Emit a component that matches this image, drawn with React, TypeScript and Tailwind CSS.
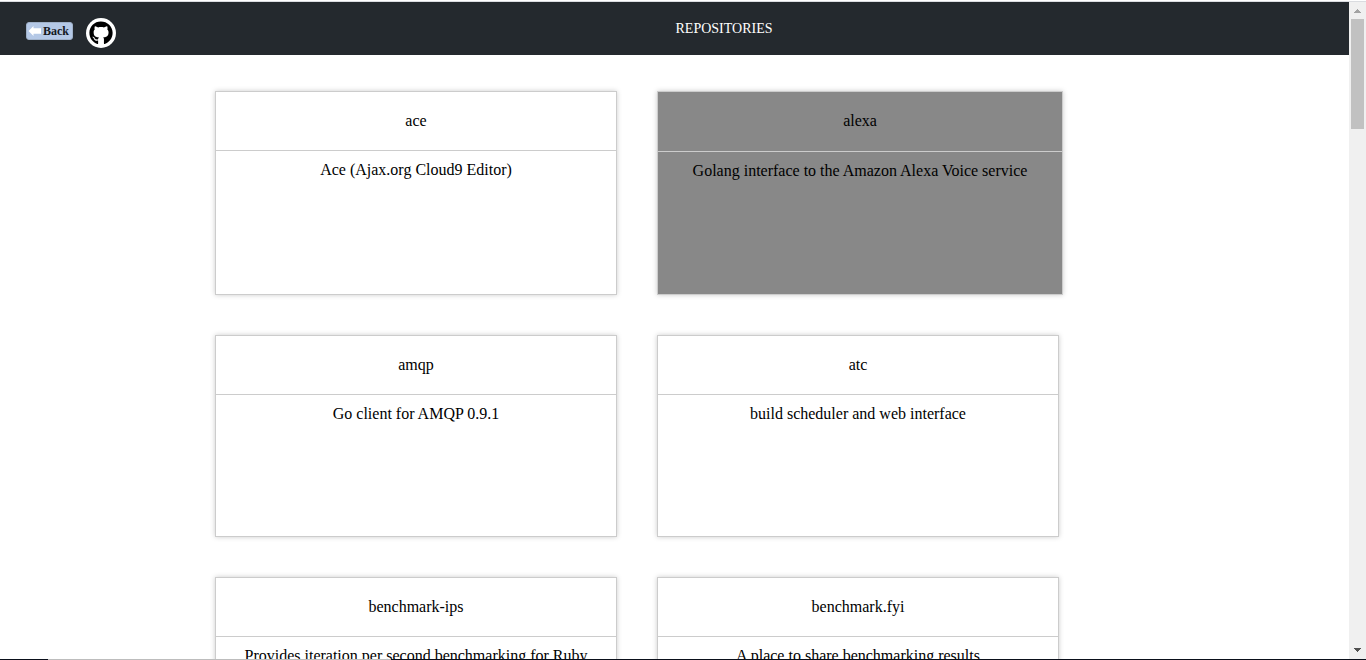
import React from "react";
import { FaGithub } from "react-icons/fa";

type Repo = { name: string; description: string; active?: boolean };

const repos: Repo[] = [
  { name: "ace", description: "Ace (Ajax.org Cloud9 Editor)" },
  { name: "alexa", description: "Golang interface to the Amazon Alexa Voice service", active: true },
  { name: "amqp", description: "Go client for AMQP 0.9.1" },
  { name: "atc", description: "build scheduler and web interface" },
  { name: "benchmark-ips", description: "Provides iteration per second benchmarking for Ruby" },
  { name: "benchmark.fyi", description: "A place to share benchmarking results" },
];

function BackButton() {
  return (
    <button
      type="button"
      className="mt-1 flex h-[18px] w-[47px] items-center justify-between rounded-[3px] border border-[#9fb0c8] bg-[#b4c8e6] pl-px pr-[3px]"
    >
      <svg viewBox="0 0 14 12" className="h-3 w-[14px]" fill="white" aria-hidden="true">
        <path d="M0.5 6 5.5 1v2.2h7.5v5.6H5.5V11z" />
      </svg>
      <span className="font-['Liberation_Serif',serif] text-[12px] font-bold leading-4 text-[#14181f]">
        Back
      </span>
    </button>
  );
}

function RepoCard({ name, description, active }: Repo) {
  return (
    <article
      className={
        active
          ? "-mr-1 min-h-[204px] border border-[#cccccc] bg-[#888888] shadow-[0_0_5px_#cccccc]"
          : "min-h-[202px] border border-[#cccccc] bg-white shadow-[0_0_5px_#cccccc]"
      }
    >
      <h2
        className={
          active
            ? "border-b border-[#cccccc] pb-[21px] pt-[19px] text-base leading-[19px]"
            : "border-b border-[#cccccc] pb-5 pt-[19px] text-base leading-[19px]"
        }
      >
        {name}
      </h2>
      <p className="px-2 pt-[9px] text-base leading-[19px]">{description}</p>
    </article>
  );
}

function Scrollbar() {
  return (
    <div className="flex w-[17px] shrink-0 flex-col items-center bg-[#f0f0f0]" aria-hidden="true">
      <svg viewBox="0 0 17 17" className="h-[17px] w-[17px] shrink-0" fill="#a3a3a3" shapeRendering="crispEdges">
        <path d="M8 7h1v1h1v1h1v1h1v1H5v-1h1V9h1V8h1z" />
      </svg>
      <div className="h-[110px] w-[13px] bg-[#c1c1c1]" />
      <svg viewBox="0 0 17 17" className="mt-auto h-[17px] w-[17px] shrink-0" fill="#505050" shapeRendering="crispEdges">
        <path d="M5 6h7v1h-1v1h-1v1H9v1H8V9H7V8H6V7H5z" />
      </svg>
    </div>
  );
}

export default function App() {
  return (
    <div className="flex h-screen flex-col overflow-hidden bg-white font-['Liberation_Serif',serif] text-black">
      <div className="h-[2px] shrink-0 border-b border-[#dadce0]" />
      <div className="flex min-h-0 flex-1">
        <div className="min-w-0 flex-1 overflow-hidden">
          <header className="grid h-[53px] grid-cols-[1fr_auto_1fr] items-start bg-[#24292e] text-white">
            <nav className="flex items-start gap-[13px] pl-[26px] pt-4">
              <BackButton />
              <a
                href="#github"
                aria-label="GitHub"
                className="flex size-[30px] items-center justify-center rounded-full bg-white text-black"
              >
                <FaGithub size={24} />
              </a>
            </nav>
            <h1 className="pl-[99px] pt-[19px] text-sm leading-4">REPOSITORIES</h1>
          </header>
          <main className="grid grid-cols-2 gap-10 pl-[215px] pr-[290px] pt-9 text-center">
            {repos.map((repo) => (
              <RepoCard key={repo.name} {...repo} />
            ))}
          </main>
        </div>
        <Scrollbar />
      </div>
      <div className="flex h-px shrink-0 bg-[#0a0f1a]">
        <div className="ml-12 w-[343px] bg-[#bdbdbd]" />
      </div>
    </div>
  );
}
